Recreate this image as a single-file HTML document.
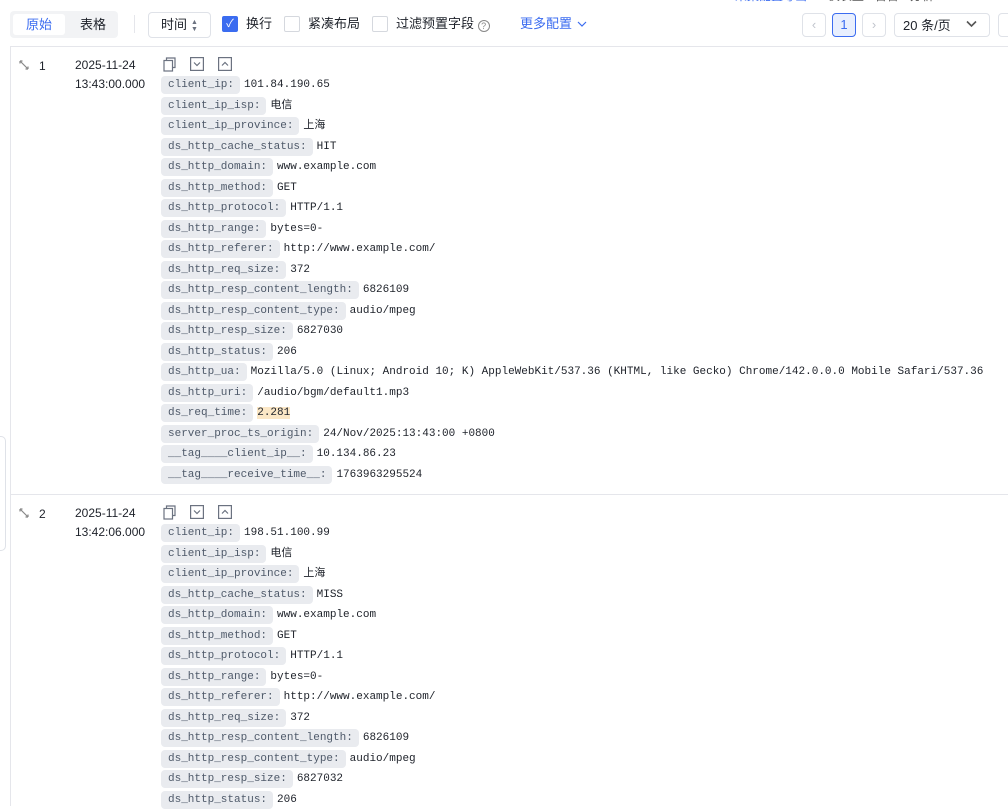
<!DOCTYPE html>
<html><head><meta charset="utf-8"><style>
*{box-sizing:border-box;margin:0;padding:0}
body{width:1008px;height:796px;overflow:hidden;background:#fff;font-family:"Liberation Sans","Noto Sans CJK SC",sans-serif;color:#1d2129;position:relative;font-size:13px}
.abs{position:absolute}
.seg{left:10px;top:11px;width:108px;height:27px;background:#f2f3f5;border-radius:4px}
.seg .a{position:absolute;left:3px;top:3px;width:52px;height:21px;background:#fff;border-radius:3px;color:#3b6cf0;text-align:center;line-height:21px;font-size:13px}
.seg .b{position:absolute;left:58px;top:3px;width:50px;line-height:21px;text-align:center}
.btn{border:1px solid #dfe2e8;border-radius:4px;background:#fff}
.cb{width:16px;height:16px;border:1px solid #d5d8de;border-radius:2px;background:#fff}
.lbl{font-size:13px;line-height:16px}
.main{left:10px;top:46px;width:1010px;height:760px;border-left:1px solid #e5e6eb;border-top:1px solid #e5e6eb}
.tag{display:inline-block;background:#e9ebef;border-radius:4px;font-family:"Liberation Mono",monospace;font-size:11px;color:#4e5969;height:18px;line-height:18px;padding:0 6px 0 7px;margin-right:4px}
.kv{position:absolute;left:150px;height:18px;white-space:nowrap;font-family:"Liberation Mono","Noto Sans CJK SC",monospace;font-size:11px;line-height:18px;color:#1d2129}
.num{position:absolute;left:28px;font-size:12px}
.date{position:absolute;left:64px;font-size:12px;line-height:19px}
.sep{position:absolute;left:0;width:1000px;border-top:1px solid #e5e6eb}
svg{position:absolute}
</style></head><body>
<div class="abs" style="left:735px;top:-13px;font-size:12px;color:#3b6cf0;white-space:nowrap">采集配置导出 <span style="color:#555">&nbsp;&nbsp;&nbsp;▪ 仪表盘 ▪ 告警 ▪ 分析</span></div>
<div class="abs seg"><div class="a">原始</div><div class="b">表格</div></div>
<div class="abs" style="left:134px;top:15px;width:1px;height:18px;background:#e5e6eb"></div>
<div class="abs btn" style="left:148px;top:12px;width:63px;height:26px"><span class="abs" style="left:12px;top:3px;line-height:18px">时间</span><span class="abs" style="left:42px;top:6px;font-size:7px;line-height:7px;color:#6b7280">▲<br>▼</span></div>
<div class="abs cb" style="left:222px;top:16px;background:#3b6cf0;border-color:#3b6cf0;color:#fff;font-size:11px;line-height:14px;text-align:center">✓</div>
<div class="abs lbl" style="left:246px;top:16px">换行</div>
<div class="abs cb" style="left:284px;top:16px"></div>
<div class="abs lbl" style="left:308px;top:16px">紧凑布局</div>
<div class="abs cb" style="left:372px;top:16px"></div>
<div class="abs lbl" style="left:396px;top:16px">过滤预置字段 <span style="display:inline-block;width:12px;height:12px;border:1px solid #888;border-radius:50%;font-size:9px;line-height:10px;text-align:center;color:#888;vertical-align:-1px">?</span></div>
<div class="abs lbl" style="left:520px;top:16px;color:#3b6cf0">更多配置</div>
<svg style="left:577px;top:20px" width="10" height="8"><path d="M1 2 L5 6 L9 2" fill="none" stroke="#3b6cf0" stroke-width="1.2"/></svg>
<div class="abs btn" style="left:802px;top:13px;width:24px;height:24px;color:#c0c4cc;text-align:center;line-height:22px">‹</div>
<div class="abs btn" style="left:832px;top:13px;width:24px;height:24px;border-color:#3b6cf0;background:#e8effe;color:#3b6cf0;text-align:center;line-height:22px">1</div>
<div class="abs btn" style="left:862px;top:13px;width:24px;height:24px;color:#c0c4cc;text-align:center;line-height:22px">›</div>
<div class="abs btn" style="left:894px;top:13px;width:96px;height:24px"><span class="abs" style="left:8px;top:3px;line-height:17px">20 条/页</span></div>
<svg style="left:966px;top:20px" width="11" height="8"><path d="M1 1.5 L5.5 6 L10 1.5" fill="none" stroke="#555" stroke-width="1.6"/></svg>
<div class="abs btn" style="left:998px;top:13px;width:24px;height:24px"></div>
<div class="abs" style="left:-6px;top:436px;width:12px;height:115px;border:1px solid #dfe2e8;border-radius:5px"></div>
<div class="abs main">
<svg style="left:8px;top:13px" width="10" height="10"><path d="M1 1 L9 9 M1 1 L1 3.5 M1 1 L3.5 1 M9 9 L9 6.5 M9 9 L6.5 9" stroke="#888" stroke-width="1.2" fill="none"/></svg>
<div class="num" style="top:12px">1</div>
<div class="date" style="top:9px">2025-11-24<br>13:43:00.000</div>
<svg style="left:152px;top:10px" width="14" height="15"><path d="M3.5 3.5 V1 H12 V10.5 H9.5" fill="none" stroke="#6b7280" stroke-width="1.2"/><rect x="1" y="3.5" width="8.5" height="10.5" fill="none" stroke="#6b7280" stroke-width="1.2"/></svg>
<svg style="left:179px;top:10px" width="14" height="14"><rect x=".6" y=".6" width="12.8" height="12.8" fill="none" stroke="#6b7280" stroke-width="1.2"/><path d="M4 5.5 L7 8.5 L10 5.5" fill="none" stroke="#6b7280" stroke-width="1.2"/></svg>
<svg style="left:207px;top:10px" width="14" height="14"><rect x=".6" y=".6" width="12.8" height="12.8" fill="none" stroke="#6b7280" stroke-width="1.2"/><path d="M4 8.5 L7 5.5 L10 8.5" fill="none" stroke="#6b7280" stroke-width="1.2"/></svg>
<div class="sep" style="top:447px"></div>
<svg style="left:8px;top:461px" width="10" height="10"><path d="M1 1 L9 9 M1 1 L1 3.5 M1 1 L3.5 1 M9 9 L9 6.5 M9 9 L6.5 9" stroke="#888" stroke-width="1.2" fill="none"/></svg>
<div class="num" style="top:460px">2</div>
<div class="date" style="top:457px">2025-11-24<br>13:42:06.000</div>
<svg style="left:152px;top:458px" width="14" height="15"><path d="M3.5 3.5 V1 H12 V10.5 H9.5" fill="none" stroke="#6b7280" stroke-width="1.2"/><rect x="1" y="3.5" width="8.5" height="10.5" fill="none" stroke="#6b7280" stroke-width="1.2"/></svg>
<svg style="left:179px;top:458px" width="14" height="14"><rect x=".6" y=".6" width="12.8" height="12.8" fill="none" stroke="#6b7280" stroke-width="1.2"/><path d="M4 5.5 L7 8.5 L10 5.5" fill="none" stroke="#6b7280" stroke-width="1.2"/></svg>
<svg style="left:207px;top:458px" width="14" height="14"><rect x=".6" y=".6" width="12.8" height="12.8" fill="none" stroke="#6b7280" stroke-width="1.2"/><path d="M4 8.5 L7 5.5 L10 8.5" fill="none" stroke="#6b7280" stroke-width="1.2"/></svg>
<div class="kv" style="top:29px"><span class="tag">client_ip:</span>101.84.190.65</div>
<div class="kv" style="top:49.5px"><span class="tag">client_ip_isp:</span>电信</div>
<div class="kv" style="top:70px"><span class="tag">client_ip_province:</span>上海</div>
<div class="kv" style="top:90.5px"><span class="tag">ds_http_cache_status:</span>HIT</div>
<div class="kv" style="top:111px"><span class="tag">ds_http_domain:</span>www.example.com</div>
<div class="kv" style="top:131.5px"><span class="tag">ds_http_method:</span>GET</div>
<div class="kv" style="top:152px"><span class="tag">ds_http_protocol:</span>HTTP/1.1</div>
<div class="kv" style="top:172.5px"><span class="tag">ds_http_range:</span>bytes=0-</div>
<div class="kv" style="top:193px"><span class="tag">ds_http_referer:</span>http://www.example.com/</div>
<div class="kv" style="top:213.5px"><span class="tag">ds_http_req_size:</span>372</div>
<div class="kv" style="top:234px"><span class="tag">ds_http_resp_content_length:</span>6826109</div>
<div class="kv" style="top:254.5px"><span class="tag">ds_http_resp_content_type:</span>audio/mpeg</div>
<div class="kv" style="top:275px"><span class="tag">ds_http_resp_size:</span>6827030</div>
<div class="kv" style="top:295.5px"><span class="tag">ds_http_status:</span>206</div>
<div class="kv" style="top:316px"><span class="tag">ds_http_ua:</span>Mozilla/5.0 (Linux; Android 10; K) AppleWebKit/537.36 (KHTML, like Gecko) Chrome/142.0.0.0 Mobile Safari/537.36</div>
<div class="kv" style="top:336.5px"><span class="tag">ds_http_uri:</span>/audio/bgm/default1.mp3</div>
<div class="kv" style="top:357px"><span class="tag">ds_req_time:</span><span style="background:#fbe7c6">2.281</span></div>
<div class="kv" style="top:377.5px"><span class="tag">server_proc_ts_origin:</span>24/Nov/2025:13:43:00 +0800</div>
<div class="kv" style="top:398px"><span class="tag">__tag____client_ip__:</span>10.134.86.23</div>
<div class="kv" style="top:418.5px"><span class="tag">__tag____receive_time__:</span>1763963295524</div>
<div class="kv" style="top:477px"><span class="tag">client_ip:</span>198.51.100.99</div>
<div class="kv" style="top:497.5px"><span class="tag">client_ip_isp:</span>电信</div>
<div class="kv" style="top:518px"><span class="tag">client_ip_province:</span>上海</div>
<div class="kv" style="top:538.5px"><span class="tag">ds_http_cache_status:</span>MISS</div>
<div class="kv" style="top:559px"><span class="tag">ds_http_domain:</span>www.example.com</div>
<div class="kv" style="top:579.5px"><span class="tag">ds_http_method:</span>GET</div>
<div class="kv" style="top:600px"><span class="tag">ds_http_protocol:</span>HTTP/1.1</div>
<div class="kv" style="top:620.5px"><span class="tag">ds_http_range:</span>bytes=0-</div>
<div class="kv" style="top:641px"><span class="tag">ds_http_referer:</span>http://www.example.com/</div>
<div class="kv" style="top:661.5px"><span class="tag">ds_http_req_size:</span>372</div>
<div class="kv" style="top:682px"><span class="tag">ds_http_resp_content_length:</span>6826109</div>
<div class="kv" style="top:702.5px"><span class="tag">ds_http_resp_content_type:</span>audio/mpeg</div>
<div class="kv" style="top:723px"><span class="tag">ds_http_resp_size:</span>6827032</div>
<div class="kv" style="top:743.5px"><span class="tag">ds_http_status:</span>206</div>
</div>
</body></html>
